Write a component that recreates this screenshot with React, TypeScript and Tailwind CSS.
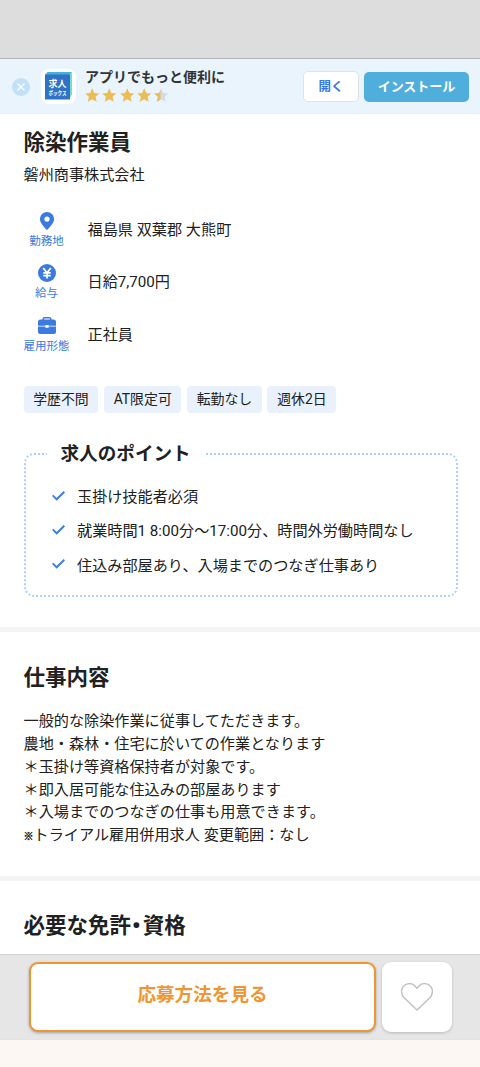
import React from "react";

const JP = "font-['Roboto','Noto_Sans_CJK_JP',sans-serif]";

const tags = ["学歴不問", "AT限定可", "転勤なし", "週休2日"];

const points = [
  "玉掛け技能者必須",
  "就業時間1 8:00分〜17:00分、時間外労働時間なし",
  "住込み部屋あり、入場までのつなぎ仕事あり",
];

const description = [
  "一般的な除染作業に従事してただきます。",
  "農地・森林・住宅に於いての作業となります",
  "＊玉掛け等資格保持者が対象です。",
  "＊即入居可能な住込みの部屋あります",
  "＊入場までのつなぎの仕事も用意できます。",
];

const STAR = "M8 0.4l2.3 5 5.500.6-4.100 3.700 1.200 5.600L8 12.500l-4.900 2.800 1.200-5.600L.2 6l5.500-.6z";

const Star: React.FC<{ half?: boolean }> = ({ half }) => (
  <svg viewBox="0 0 16 16" className="h-[14.5px] w-[14.5px]">
    <path d={STAR} fill={half ? "#d0dce6" : "#edbd55"} />
    {half && (
      <>
        <clipPath id="star-half">
          <rect width="7.2" height="16" />
        </clipPath>
        <path d={STAR} fill="#edbd55" clipPath="url(#star-half)" />
      </>
    )}
  </svg>
);

const PinIcon: React.FC = () => (
  <svg viewBox="0 0 18 18" className="h-[18px] w-[18px]">
    <path
      fill="#3b7be0"
      fillRule="evenodd"
      d="M9 0a7.1 7.1 0 0 0-7.1 7.1C1.9 12 9 18 9 18s7.1-6 7.1-10.900A7.100 7.100 0 0 0 9 0zm0 4.500a2.600 2.600 0 1 1 0 5.200 2.600 2.600 0 0 1 0-5.200z"
    />
  </svg>
);

const YenIcon: React.FC = () => (
  <svg viewBox="0 0 18 18" className="h-[18px] w-[18px]">
    <circle cx="9" cy="9" r="9" fill="#3b7be0" />
    <path
      d="M5.200 3.900L9 8.800l3.800-4.900M9 8.800v5.700M5.300 8.900h7.400M5.300 11.600h7.400"
      fill="none"
      stroke="#fff"
      strokeWidth="1.7"
    />
  </svg>
);

const BagIcon: React.FC = () => (
  <svg viewBox="0 0 18 18" className="h-[18px] w-[18px]">
    <path d="M5.200 4V2.200Q5.200.8 6.600.8h4.800q1.400 0 1.400 1.400V4" fill="none" stroke="#3b7be0" strokeWidth="1.600" />
    <path
      fill="#3b7be0"
      d="M2.500 2.600h13A2.500 2.500 0 0 1 18 5.100v3.600h-7.400V8H7.400v.7H0V5.100a2.500 2.500 0 0 1 2.500-2.500zM0 9.600h7.400v1.200h3.200V9.600H18v5.400a2 2 0 0 1-2 2H2a2 2 0 0 1-2-2z"
    />
  </svg>
);

const AppLogo: React.FC = () => (
  <div className="flex h-[35px] w-[35px] items-center justify-center rounded-[8px] bg-white">
    <svg viewBox="0 0 35 35" className="h-[35px] w-[35px] font-['Noto_Sans_CJK_JP',sans-serif] font-bold">
      <path d="M4 6l2.500-3H31l-2.500 3z" fill="#48afd9" />
      <path d="M28.500 6L31 3v22.500l-2.500 4z" fill="#73dfc4" />
      <rect x="4" y="5.500" width="25" height="25" fill="#2f72c8" />
      <text x="16.500" y="17.500" fontSize="9" textAnchor="middle" fill="#fff">
        求人
      </text>
      <text x="16.500" y="26" fontSize="6" textAnchor="middle" textLength="18" lengthAdjust="spacingAndGlyphs" fill="#fff">
        ボックス
      </text>
    </svg>
  </div>
);

const AppBanner: React.FC = () => (
  <div className="flex h-[56px] items-center border-t border-[#b1b3b4] bg-[#e9f4fc] pr-[11px] pl-[12px]">
    <button className="flex h-[18px] w-[18px] items-center justify-center rounded-full bg-[#c0e1f8]">
      <svg viewBox="0 0 8 8" className="h-2 w-2" stroke="#fff" strokeWidth="1.2">
        <path d="M.5.500l7 7M7.500.500l-7 7" />
      </svg>
    </button>
    <div className="ml-[11px]">
      <AppLogo />
    </div>
    <div className="ml-[9px] flex-1 pb-[3px]">
      <p className="text-[14px] leading-[18px] font-bold text-[#303437]">アプリでもっと便利に</p>
      <div className="mt-[2px] flex gap-[2.800px]">
        <Star />
        <Star />
        <Star />
        <Star />
        <Star half />
      </div>
    </div>
    <button className="h-[31px] w-[56px] rounded-[5px] border border-[#e0e3e6] bg-white pt-[1px] text-[12.500px] font-bold text-[#3777e4]">
      開く
    </button>
    <button className="ml-[5px] h-[30px] w-[105px] rounded-[5px] bg-[#50aedc] text-[13px] font-bold text-white">
      インストール
    </button>
  </div>
);

const InfoRow: React.FC<{ icon: React.ReactNode; label: string; value: string }> = ({ icon, label, value }) => (
  <div className="flex h-[52.500px] items-center">
    <div className="flex w-[46px] flex-col items-center">
      {icon}
      <span className="mt-[3px] text-[11.500px] leading-[16px] whitespace-nowrap text-[#3b7be0]">{label}</span>
    </div>
    <span className="ml-[18px] text-[15.150px]">{value}</span>
  </div>
);

const ActionBar: React.FC = () => (
  <div className="fixed inset-x-0 bottom-0">
    <div className="flex h-[85px] gap-[6px] border-t border-[#d2d2d2] bg-[#e6e6e6] pt-[7px] pl-[29px]">
      <button className="h-[70px] w-[347px] rounded-[9px] border-2 border-[#f09531] bg-white pb-[3px] text-[18.600px] font-bold text-[#f09531] shadow-[0_1px_3px_rgba(0,0,0,0.3)]">
        応募方法を見る
      </button>
      <button className="flex h-[70px] w-[70px] items-center justify-center rounded-[9px] bg-white shadow-[0_1px_3px_rgba(0,0,0,0.2)]">
        <svg viewBox="0 0 32 28" className="h-[28px] w-[32px]" fill="none" stroke="#c0c0c0" strokeWidth="1.400">
          <path d="M16 27L3 14.500C.3 11.800-.3 7 2 3.800 5-.3 11.500-.2 14 3l2 2.400L18 3c2.500-3.200 9-3.300 12 .8 2.300 3.200 1.700 8-1 10.700z" />
        </svg>
      </button>
    </div>
    <div className="h-[28px] border-t border-[#f3ded1] bg-[#fdf7f3]" />
  </div>
);

const App: React.FC = () => {
  return (
    <div className={`${JP} h-[1067px] overflow-hidden bg-white text-[#212121]`}>
      <div className="h-[58px] bg-[#dddddd]" />
      <AppBanner />

      <section className="h-[512.500px] pt-[13px] pr-[22.500px] pl-[23.500px]">
        <h1 className="text-[21.500px] leading-[32px] font-bold">除染作業員</h1>
        <p className="mt-[4px] text-[15.150px] leading-[24px]">磐州商事株式会社</p>

        <div className="mt-[17px]">
          <InfoRow icon={<PinIcon />} label="勤務地" value="福島県 双葉郡 大熊町" />
          <InfoRow icon={<YenIcon />} label="給与" value="日給7,700円" />
          <InfoRow icon={<BagIcon />} label="雇用形態" value="正社員" />
        </div>

        <div className="mt-[24px] flex gap-[5.500px]">
          {tags.map((tag) => (
            <span key={tag} className="rounded-[4px] bg-[#e9f1fc] px-[9.700px] text-[13.900px] leading-[27px]">
              {tag}
            </span>
          ))}
        </div>

        <fieldset className="mt-[27px] h-[157.500px] rounded-[10px] border-2 border-dotted border-[#abd0fb]">
          <legend className="ml-[21.500px] px-[13.500px] text-[18.600px] leading-[28px] font-bold">求人のポイント</legend>
          <ul className="mt-[12.500px] ml-[26px]">
            {points.map((point) => (
              <li key={point} className="flex h-[34.400px] items-center">
                <svg viewBox="0 0 13 10" className="mb-[3px] h-[10px] w-[13px]" fill="none" stroke="#3b7be0" strokeWidth="1.900">
                  <path d="M.7 4.300l4 4L12.300.800" />
                </svg>
                <span className="ml-[12.500px] text-[15.150px] whitespace-nowrap">{point}</span>
              </li>
            ))}
          </ul>
        </fieldset>
      </section>

      <section className="h-[249.500px] border-t-[5.500px] border-[#f4f4f4] px-[23.500px] pt-[30px]">
        <h2 className="text-[21.500px] leading-[32px] font-bold">仕事内容</h2>
        <div className="mt-[16.500px] text-[15.150px] leading-[22.850px] whitespace-nowrap">
          {description.map((line) => (
            <p key={line}>{line}</p>
          ))}
          <p>
            <span className="text-[10px] [-webkit-text-stroke:0.4px]">※</span>
            トライアル雇用併用求人 変更範囲：なし
          </p>
        </div>
      </section>

      <section className="border-t-[5.500px] border-[#f4f4f4] px-[23.500px] pt-[29px]">
        <h2 className="text-[21.500px] leading-[32px] font-bold">
          必要な免許<span className="mr-[1px] [-webkit-text-stroke:1.6px]">･</span>資格
        </h2>
      </section>

      <ActionBar />
    </div>
  );
};

export default App;
